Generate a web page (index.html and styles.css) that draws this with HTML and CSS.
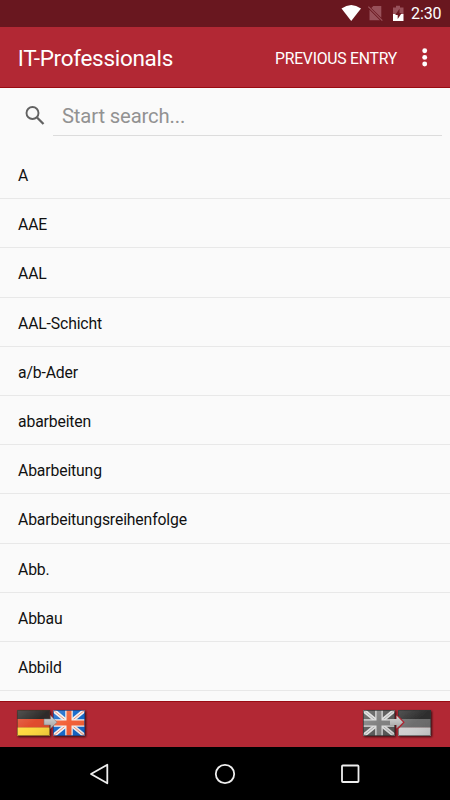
FILE: index.html
```html
<!DOCTYPE html>
<html lang="en">
<head>
<meta charset="utf-8">
<title>IT-Professionals</title>
<link rel="stylesheet" href="styles.css">
</head>
<body>
<div class="screen">
  <div class="status">
    <svg class="status-icons" width="64" height="27" viewBox="0 0 64 27">
      <path d="M0.500 8.500Q10.200 1.500 20 8.500L10.200 21Z" fill="#fff"/>
      <path d="M32.300 6H40.300V17.800L30.300 8ZM28.500 9.800L39 20.300H28.500Z" fill="#98515a"/>
      <path d="M27.300 6.700L41.300 20.700" stroke="#98515a" stroke-width="1.200"/>
      <path d="M52 7.500H55V5.800H59V7.500H62.500V14H52Z" fill="#98515a"/>
      <path d="M52 14H62.500V21H52Z" fill="#fff"/>
      <path d="M58.500 8.700L54.200 14.900H56.700V19L60.700 12.900H58.500Z" fill="#6b1720"/>
    </svg>
    <span class="clock">2:30</span>
  </div>
  <header class="appbar">
    <h1 class="title">IT-Professionals</h1>
    <span class="action">PREVIOUS ENTRY</span>
    <svg class="more" width="6" height="20" viewBox="0 0 6 20" fill="#fff"><circle cx="2.700" cy="2.800" r="2.450"/><circle cx="2.700" cy="9.400" r="2.450"/><circle cx="2.700" cy="16" r="2.450"/></svg>
  </header>
  <main class="content">
    <div class="search">
      <svg class="search-icon" width="20" height="20" viewBox="0 0 20 20" fill="none" stroke="#626262"><circle cx="7.500" cy="7" r="6" stroke-width="1.900"/><path d="M12 11.500L18.500 18" stroke-width="2.300"/></svg>
      <div class="field">Start search...</div>
    </div>
    <ul class="list">
      <li>A</li><li>AAE</li><li>AAL</li><li>AAL-Schicht</li><li>a/b-Ader</li><li>abarbeiten</li><li>Abarbeitung</li><li>Abarbeitungsreihenfolge</li><li>Abb.</li><li>Abbau</li><li>Abbild</li>
    </ul>
  </main>
  <footer class="langbar">
    <svg width="74" height="32" viewBox="0 0 74 32">
      <defs>
        <linearGradient id="shine" x1="0" y1="0" x2="1" y2="1"><stop offset="0" stop-color="#fff" stop-opacity=".22"/><stop offset=".5" stop-color="#fff" stop-opacity=".04"/><stop offset="1" stop-opacity=".1"/></linearGradient>
        <linearGradient id="metal" x1="0" y1="0" x2="0" y2="1"><stop offset="0" stop-color="#d8d8d8"/><stop offset="1" stop-color="#a2a2a2"/></linearGradient>
        <filter id="shadow" x="-20%" y="-20%" width="150%" height="150%"><feDropShadow dx="1" dy="1" stdDeviation="1" flood-opacity=".7"/></filter>
      </defs>
      <g filter="url(#shadow)">
        <path d="M1 3H34V12H1Z" fill="#252321"/><path d="M1 12H34V20.500H1Z" fill="#df4425"/><path d="M1 20.500H34V29H1Z" fill="#ffd83a"/>
        <path d="M1 3H34V29H1Z" fill="url(#shine)"/><path d="M1.500 3.500H33.500V28.500H1.500Z" fill="none" stroke="#482c20" stroke-opacity=".55"/>
      </g>
      <g filter="url(#shadow)">
        <svg x="37" y="3" width="32" height="26" viewBox="0 0 32 26">
          <path d="M0 0H32V26H0Z" fill="#0d62c8"/>
          <path d="M0 0L32 26M32 0L0 26" stroke="#f4f1ef" stroke-width="4"/><path d="M0 0L32 26M32 0L0 26" stroke="#ef8a74" stroke-width="1"/>
          <path d="M16 0V26M0 13H32" stroke="#f4f1ef" stroke-width="7.500"/><path d="M16 0V26M0 13H32" stroke="#f25a2f" stroke-width="5"/>
          <path d="M0 0H32V26H0Z" fill="url(#shine)"/><path d="M.5 .5H31.500V25.500H.5Z" fill="none" stroke="#243b78" stroke-opacity=".7"/>
        </svg>
      </g>
      <path d="M28 12H34.500V8.500L41 15.300L34.500 21.500V18H28Z" fill="url(#metal)" stroke="#777" stroke-width=".5"/>
    </svg>
    <svg width="74" height="32" viewBox="0 0 74 32">
      <g filter="url(#shadow)">
        <svg x="1" y="3" width="32" height="26" viewBox="0 0 32 26">
          <path d="M0 0H32V26H0Z" fill="#555"/>
          <path d="M0 0L32 26M32 0L0 26" stroke="#ddd" stroke-width="4"/><path d="M0 0L32 26M32 0L0 26" stroke="#aaa" stroke-width="1"/>
          <path d="M16 0V26M0 13H32" stroke="#ddd" stroke-width="7.500"/><path d="M16 0V26M0 13H32" stroke="#7c7c7c" stroke-width="5"/>
          <path d="M0 0H32V26H0Z" fill="url(#shine)"/><path d="M.5 .5H31.500V25.500H.5Z" fill="none" stroke="#333" stroke-opacity=".7"/>
        </svg>
      </g>
      <g filter="url(#shadow)">
        <path d="M36 3H69V12H36Z" fill="#252525"/><path d="M36 12H69V20.500H36Z" fill="#686868"/><path d="M36 20.500H69V29H36Z" fill="#cecece"/>
        <path d="M36 3H69V29H36Z" fill="url(#shine)"/><path d="M36.500 3.500H68.500V28.500H36.500Z" fill="none" stroke="#333" stroke-opacity=".55"/>
      </g>
      <path d="M36.200 9.500L41.700 15.300L36 21.500" fill="none" stroke="#b02531" stroke-width="1.500"/>
      <path d="M28 12H34.500V8.500L41 15.300L34.500 21.500V18H28Z" fill="url(#metal)"/>
    </svg>
  </footer>
  <nav class="nav">
    <svg width="22" height="22" viewBox="0 0 22 22"><path d="M2 11L18.300 1.700V20.300Z"/></svg>
    <svg width="22" height="22" viewBox="0 0 22 22"><circle cx="11" cy="11" r="9.200"/></svg>
    <svg width="22" height="22" viewBox="0 0 22 22"><rect x="3" y="2.500" width="16.500" height="16.500" rx=".8"/></svg>
  </nav>
</div>
</body>
</html>
```
FILE: styles.css
```css
* { box-sizing: border-box; }
body { margin: 0; font-family: Roboto, sans-serif; background: #000; }
.screen { width: 450px; height: 800px; display: flex; flex-direction: column; overflow: hidden; }
.status { height: 27px; flex: none; background: #69171f; display: flex; align-items: center; justify-content: flex-end; gap: 5px; padding-right: 9px; color: #fff; }
.clock { font-size: 16px; line-height: 29px; width: 30px; white-space: nowrap; letter-spacing: -.1px; }
.status-icons { margin-right: 1px; }
.appbar { height: 61px; flex: none; background: #b22834; border-bottom: 1px solid #990b12; display: flex; align-items: center; padding: 2px 22px 0 17.700px; color: #fff; }
.title { margin: 0; font-size: 22.500px; font-weight: 400; letter-spacing: -.3px; flex: 1; }
.action { font-size: 15.750px; letter-spacing: -.24px; margin-right: 25px; }
.more { display: block; }
.content { height: 613px; flex: none; background: #fafafa; overflow: hidden; }
.search { height: 62px; display: flex; padding: 0 8px 0 25px; }
.search-icon { margin: 18px 8px 0 0; flex: none; }
.field { flex: 1; height: 48px; border-bottom: 1px solid #dcdcdc; padding-left: 9px; padding-top: 2px; line-height: 53px; font-size: 20.250px; letter-spacing: -.15px; color: #929292; }
.list { list-style: none; margin: 0; padding: 0; }
.list li { height: 49.200px; border-bottom: 1px solid #e8e8e8; padding-left: 18px; line-height: 52px; font-size: 15.750px; letter-spacing: -.14px; color: #111; }
.langbar { height: 46px; flex: none; background: #b22834; border-top: 1px solid #990b12; display: flex; justify-content: space-between; padding: 5px 14px 0 16px; }
.nav { height: 53px; flex: none; background: #000; display: flex; justify-content: space-between; align-items: center; padding: 0 89px; }
.nav svg { fill: none; stroke: #eee; stroke-width: 1.800; stroke-linejoin: round; }
```
